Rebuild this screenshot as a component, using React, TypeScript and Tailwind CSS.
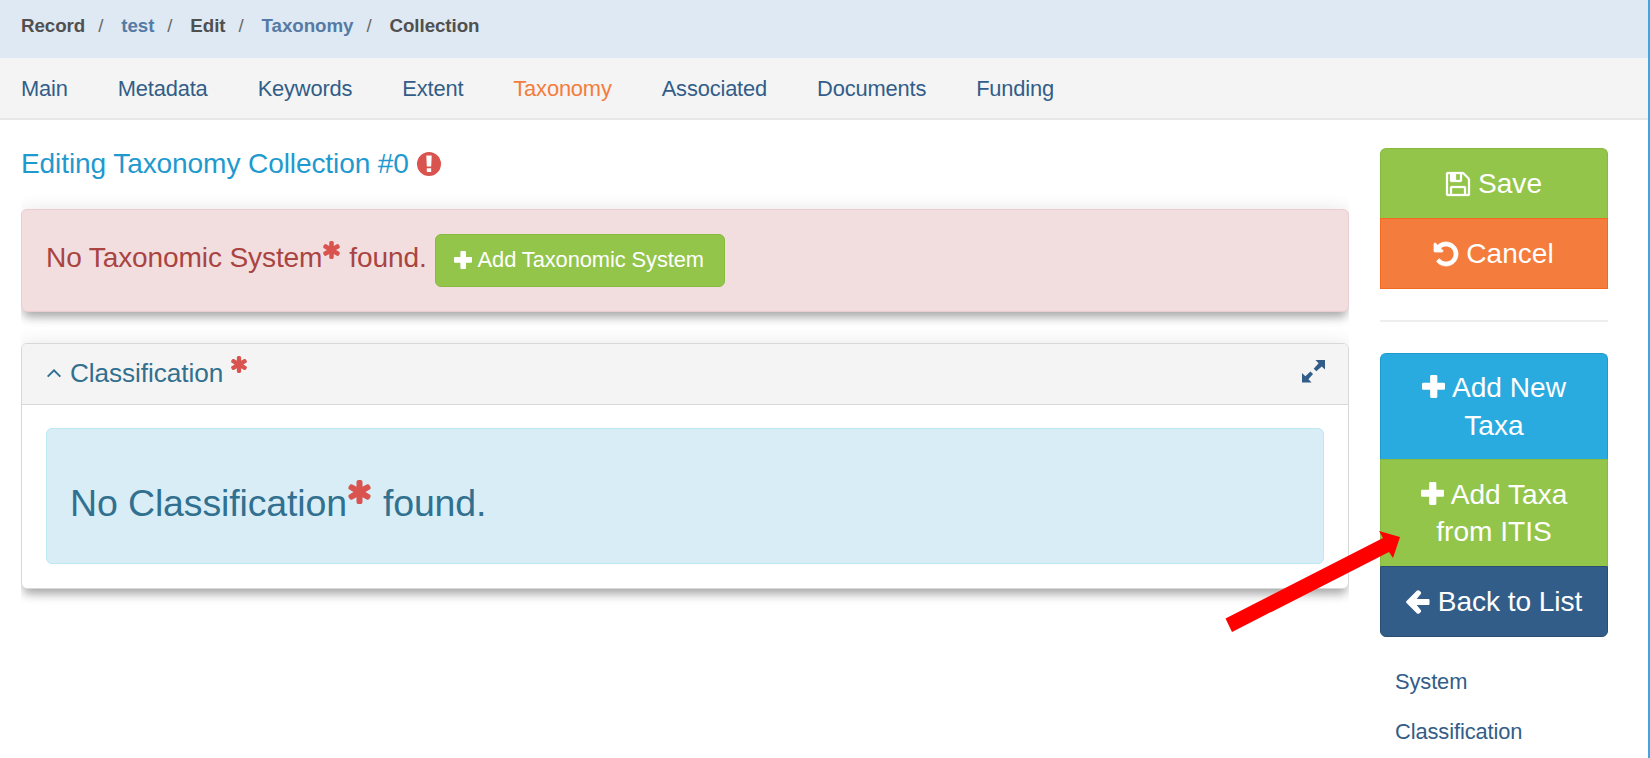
import React from "react";

type IconProps = { d: string; vb?: string; className?: string; stroke?: number };

const Icon = ({ d, vb = "0 0 24 24", className = "", stroke }: IconProps) => (
  <svg
    viewBox={vb}
    fill="currentColor"
    stroke={stroke ? "currentColor" : "none"}
    strokeWidth={stroke}
    className={`inline-block shrink-0 overflow-visible ${className}`}
  >
    <path d={d} fillRule="evenodd" />
  </svg>
);

const PLUS =
  "M9.700 0H14.800Q16 0 16 1.200V8H22.800Q24 8 24 9.200V14.300Q24 15.500 22.800 15.500H16V22.800Q16 24 14.800 24H9.700Q8.500 24 8.500 22.800V15.500H1.200Q0 15.500 0 14.300V9.200Q0 8 1.200 8H8.500V1.200Q8.500 0 9.700 0Z";
const SAVE =
  "M384 1408h768v-384h-768v384zm896 0h128v-896q0-14-10-38.500t-20-34.500l-281-281q-10-10-34-20t-39-10v416q0 40-28 68t-68 28h-576q-40 0-68-28t-28-68v-416h-128v1280h128v-416q0-40 28-68t68-28h832q40 0 68 28t28 68v416zm-384-928v-320q0-13-9.500-22.500t-22.500-9.500h-192q-13 0-22.500 9.500t-9.500 22.500v320q0 13 9.500 22.500t22.500 9.500h192q13 0 22.500-9.500t9.500-22.500zm640 32v928q0 40-28 68t-68 28h-1344q-40 0-68-28t-28-68v-1344q0-40 28-68t68-28h928q40 0 88 20t76 48l280 280q28 28 48 76t20 88z";
const UNDO =
  "M1536 768q0 156-61 298t-164 245-245 164-298 61q-172 0-327-72.500t-264-204.500q-7-10-6.500-22.500t8.500-20.500l137-138q10-9 25-9 16 2 23 12 73 95 179 147t225 52q104 0 198.500-40.500t163.500-109.500 109.500-163.500 40.500-198.500-40.500-198.500-109.500-163.500-163.500-109.500-198.500-40.500q-98 0-188 35.500t-160 101.500l137 138q31 30 14 69-17 40-59 40h-448q-26 0-45-19t-19-45v-448q0-42 40-59 39-17 69 14l130 129q107-101 244.500-156.500t284.500-55.500q156 0 298 61t245 164 164 245 61 298z";
const ASTERISK =
  "M1386 922q46 26 59.500 77.500t-12.500 97.500l-64 110q-26 46-77.500 59.500t-97.500-12.500l-266-153v307q0 52-38 90t-90 38h-128q-52 0-90-38t-38-90v-307l-266 153q-46 26-97.500 12.500t-77.500-59.500l-64-110q-26-46-12.500-97.500t59.500-77.500l266-154-266-154q-46-26-59.500-77.500t12.500-97.500l64-110q26-46 77.500-59.500t97.500 12.500l266 153v-307q0-52 38-90t90-38h128q52 0 90 38t38 90v307l266-153q46-26 97.500-12.500t77.500 59.500l64 110q26 46 12.500 97.500t-59.500 77.500l-266 154z";
const ALERT =
  "M12 0A12 12 0 1 1 12 24A12 12 0 1 1 12 0ZM9.300 3.600 9.800 14.600H14.200L14.700 3.600ZM9.800 16.200V20H14.200V16.200Z";
const ARROW_LEFT =
  "M0.300 11.300 10.800 0.800Q12 -0.200 13.500 0.800L14.800 2Q15.600 3 14.800 4L10.700 9H22.500Q23.500 9 23.500 10V14Q23.500 15 22.500 15H10.700L14.800 20Q15.600 21 14.800 22L13.500 23.200Q12 24.200 10.800 23.200L0.300 12.700Q-0.200 12 0.300 11.300Z";
const EXPAND =
  "M14 0H24V10L20.600 6.800 15 11.800 12.200 9 17.300 3.500ZM0 13.500 3.500 17 8.800 12 11.500 14.700 6.700 20 10 23.500H0Z";

const Star = ({ className }: { className: string }) => (
  <Icon d={ASTERISK} vb="20 0 1432 1536" className={`text-[#d9534f] ${className}`} />
);

const crumbs = ["Record", "test", "Edit", "Taxonomy", "Collection"];
const linkCrumbs = ["test", "Taxonomy"];
const tabs = ["Main", "Metadata", "Keywords", "Extent", "Taxonomy", "Associated", "Documents", "Funding"];

const panelShadow = "shadow-[0_8px_10px_-3px_rgba(0,0,0,0.30),0_0_18px_rgba(0,0,0,0.10)]";

export default function App() {
  return (
    <div className="relative h-[758px] w-[1650px] overflow-hidden border-r-2 border-[#45a3dd] bg-white font-['Liberation_Sans',Arial,sans-serif] text-[21.875px] text-[#325d88]">
      <nav className="flex h-[58px] items-start bg-[#dfe9f3] pl-[21px] pt-[12px] text-[18.75px] leading-[28px] tracking-[-0.06px] text-[#505050]">
        {crumbs.map((c, i) => (
          <React.Fragment key={c}>
            {i > 0 && <span className="w-[36px] pl-[13px] text-[#6a6a6a]">/</span>}
            <b className={linkCrumbs.includes(c) ? "text-[#557ba5]" : ""}>{c}</b>
          </React.Fragment>
        ))}
      </nav>
      <nav className="flex h-[62px] gap-[50px] border-b-2 border-[#e7e7e7] bg-[#f4f4f4] pl-[21px] pt-[14px] leading-[34px] tracking-[-0.16px]">
        {tabs.map((t) => (
          <a key={t} className={t === "Taxonomy" ? "text-[#f47c3c]" : ""}>{t}</a>
        ))}
      </nav>

      <div className="flex pl-[21px]">
        <main className="w-[1328px]">
          <h1 className="mt-[6px] flex h-[70px] items-center pb-[6px] pt-[12px] text-[28.1px] leading-[34px] tracking-[-0.12px] text-[#1f9acf]">
            Editing Taxonomy Collection #0
            <Icon d={ALERT} className="ml-[8px] mt-[-1px] size-[24px] text-[#d9534f]" />
          </h1>

          <div className="-mt-px overflow-hidden pb-[31px] pt-[14px]">
            <section className={`flex h-[103px] rounded-[6px] border border-[#ebccd1] bg-[#f2dede] pl-[24px] pt-[24px] text-[28.1px] text-[#a94442] ${panelShadow}`}>
              <p className="flex h-[52px] items-start leading-[48px] tracking-[-0.14px]">
                No Taxonomic System
                <Star className="ml-px mt-[7px] h-[18px] w-[17px]" />
                <span className="ml-[9px]">found.</span>
              </p>
              <button className="ml-[8px] flex h-[53px] w-[290px] items-center rounded-[6px] border border-[#87ba3f] bg-[#93c54b] pl-[18px] text-[21.875px] tracking-[-0.08px] text-white">
                <Icon d={PLUS} className="mr-[6px] mt-[-2px] size-[18px]" />
                Add Taxonomic System
              </button>
            </section>
          </div>

          <div className="-mt-[14px] overflow-hidden pb-[31px] pt-[14px]">
            <section className={`h-[246px] rounded-[6px] border border-[#d8d8d8] bg-white ${panelShadow}`}>
              <header className="flex h-[61px] items-start rounded-t-[5px] border-b border-[#d8d8d8] bg-[#f4f4f4] pl-[24px] pt-[14px] text-[26.2px] leading-[31px] tracking-[-0.08px] text-[#31708f]">
                <svg viewBox="0 0 16 10" fill="none" stroke="currentColor" strokeWidth="2.200" className="mt-[11px] h-[9px] w-[16px]">
                  <path d="M1 8.500 8 1.500 15 8.500" />
                </svg>
                <span className="ml-[8px]">Classification</span>
                <Star className="ml-[8px] mt-[-2px] h-[17px] w-[16px]" />
                <Icon d={EXPAND} className="ml-auto mr-[23px] mt-[2px] size-[23px] text-[#325d88]" />
              </header>
              <div className="px-[24px] pt-[23px]">
                <div className="flex h-[136px] rounded-[6px] border border-[#bce8f1] bg-[#d9edf7] pl-[23px] pt-[52px] text-[37.5px] leading-[44px] tracking-[-0.14px] text-[#31708f]">
                  No Classification
                  <Star className="ml-px mt-[-1px] h-[24px] w-[23px]" />
                  <span className="ml-[12px]">found.</span>
                </div>
              </div>
            </section>
          </div>
        </main>

        <aside className="ml-[31px] w-[228px] pt-[28px] text-center text-[28.1px] leading-[37.500px] text-white">
          <button className="flex h-[70px] w-full items-center justify-center gap-[8px] rounded-t-[6px] border border-b-0 border-[#87ba3f] bg-[#93c54b]">
            <Icon d={SAVE} vb="0 0 1536 1536" stroke={16} className="size-[24px]" />
            Save
          </button>
          <button className="flex h-[71px] w-full items-center justify-center gap-[8px] border border-[#f3691f] bg-[#f47c3c]">
            <Icon d={UNDO} vb="0 0 1536 1536" stroke={50} className="size-[24px]" />
            Cancel
          </button>
          <hr className="mb-[31px] mt-[31px] border-t-2 border-[#eeeeee]" />
          <button className="h-[106px] w-full rounded-t-[6px] border border-b-0 border-[#1f9acf] bg-[#29abe0]">
            <Icon d={PLUS} className="-mt-[6px] mr-[7px] size-[23px]" />
            Add New<br />Taxa
          </button>
          <button className="h-[107px] w-full border border-b-0 border-[#87ba3f] bg-[#93c54b]">
            <Icon d={PLUS} className="-mt-[6px] mr-[7px] size-[23px]" />
            Add Taxa<br />from ITIS
          </button>
          <button className="flex h-[71px] w-full items-center justify-center gap-[8px] rounded-b-[6px] border border-[#2a4e72] bg-[#325d88]">
            <Icon d={ARROW_LEFT} className="size-[24px]" />
            <span className="tracking-[-0.08px]">Back to List</span>
          </button>
          <div className="flex flex-col items-start gap-[18px] pl-[15px] pt-[29px] text-[21.875px] leading-[31.500px] tracking-[-0.1px] text-[#325d88]">
            <a>System</a>
            <a>Classification</a>
          </div>
        </aside>
      </div>

      <svg viewBox="0 0 180 110" className="absolute left-[1222px] top-[526px] h-[110px] w-[180px]" fill="#ff0000">
        <path d="M3.500 92.500 161 12 157 5 178 11 171 32 167 26 10 106Z" />
      </svg>
    </div>
  );
}
